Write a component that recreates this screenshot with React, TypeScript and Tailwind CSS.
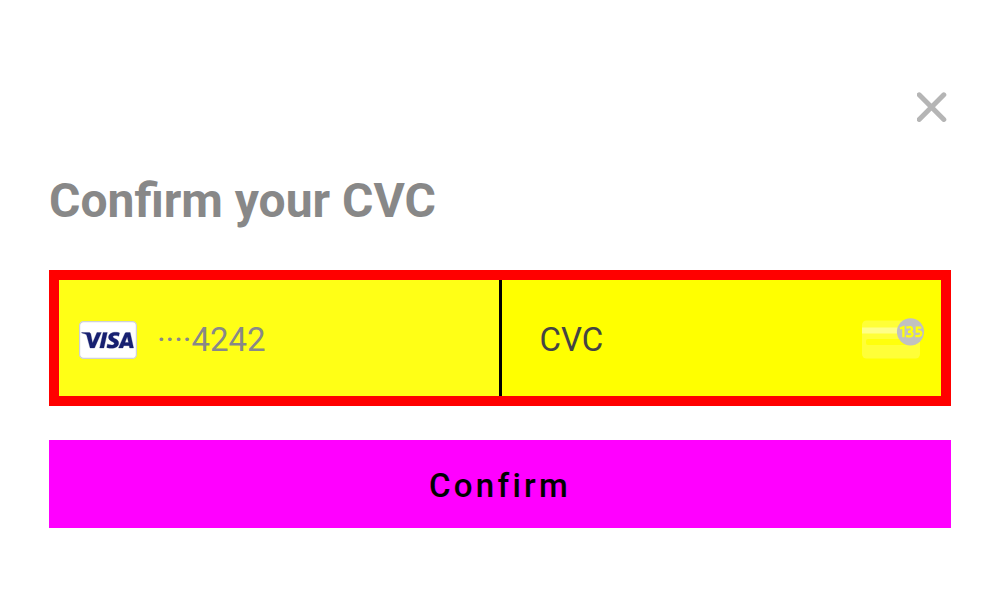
function CloseIcon() {
  return (
    <svg viewBox="0 0 30 30" className="size-[30px]" fill="none" stroke="#b5b5b5" strokeWidth="5" strokeLinecap="round" aria-hidden="true">
      <path d="M2.2 2.8 L26.8 27.4 M26.8 2.8 L2.2 27.4" />
    </svg>
  );
}

function VisaLogo() {
  return (
    <svg viewBox="0 0 58 38" className="h-[38px] w-[58px] shrink-0" role="img" aria-label="Visa">
      <rect x="0.6" y="0.6" width="56.8" height="36.8" rx="4" fill="#fff" stroke="#ced0d8" strokeWidth="1.2" />
      <g transform="translate(2.6 11.2) scale(0.052 0.0495)" fill="#172070" stroke="#172070" strokeWidth="6">
        <path d="M651.19.5c-70.93,0-134.32,36.77-134.32,104.69,0,77.9,112.42,83.28,112.42,122.42,0,16.48-18.88,31.23-51.14,31.23-45.77,0-79.98-20.61-79.98-20.61l-14.64,68.55s39.41,17.41,91.73,17.41c77.55,0,138.58-38.57,138.58-107.66,0-82.32-112.89-87.54-112.89-123.86,0-12.91,15.5-27.05,47.66-27.05,36.29,0,65.89,14.99,65.89,14.99l14.33-66.2S696.61.5,651.18.5ZM2.22,5.5L.5,15.49s29.84,5.46,56.72,16.36c34.61,12.49,37.07,19.77,42.9,42.35l63.51,244.83h85.14L379.93,5.5h-84.94l-84.28,213.17-34.39-180.7C173.17,17.29,157.21,5.5,137.67,5.5H2.23ZM414.05,5.5l-66.63,313.53h81L494.85,5.5h-80.8ZM865.82,5.5c-19.53,0-29.88,10.46-37.47,28.73l-118.67,284.8h84.94l16.43-47.47h103.48l9.99,47.47h74.95L934.08,5.5h-68.27ZM876.87,90.21l25.18,117.65h-67.45l42.28-117.65Z" />
      </g>
    </svg>
  );
}

function SecurityCodeIcon() {
  return (
    <svg viewBox="0 0 64 44" className="h-11 w-16 shrink-0" aria-hidden="true">
      <rect x="1" y="2.5" width="58" height="38" rx="4.5" fill="#ffff38" />
      <rect x="1" y="9.5" width="58" height="6" fill="#ffff88" />
      <rect x="5" y="21" width="50" height="6" rx="2" fill="#ffff0c" />
      <circle cx="49.5" cy="13.8" r="13.6" fill="#c1c1c1" />
      <g fill="none" stroke="#ffff0c" strokeWidth="2.3" transform="translate(0 -1.7)">
        <path d="M39 12.2 L42.4 10.9 V21" />
        <path d="M45.3 11.4 Q51 9.6 51 12.9 Q51 15.3 47 15.5 Q51.6 15.6 51.6 18 Q51.4 21.2 45.1 19.6" />
        <path d="M60.3 11.4 H55.8 V15.2 Q60.5 14.4 60.3 17.3 Q60 20.8 54.3 19.6" />
      </g>
    </svg>
  );
}

export default function App() {
  return (
    <main className="min-h-screen bg-white px-[49px] pt-[92px] font-['Roboto',sans-serif]">
      <div className="flex justify-end pr-1">
        <button type="button" aria-label="Close">
          <CloseIcon />
        </button>
      </div>
      <form onSubmit={(event) => event.preventDefault()}>
        <h1 className="mt-[49px] text-[48px] leading-[60px] font-bold text-[#888888]">Confirm your CVC</h1>
        <div className="mt-[39px] grid h-[136px] grid-cols-[1fr_3px_1fr] border-10 border-[#ff0000] bg-[#ffff00]">
          <div className="flex min-w-0 items-center gap-5 bg-[#ffff16] pt-1 pl-5 text-[33px] text-[#888888]">
            <VisaLogo />
            <span>····4242</span>
          </div>
          <div className="bg-black" />
          <div className="flex min-w-0 items-center pt-1 pr-4 pl-[38px]">
            <input
              type="text"
              inputMode="numeric"
              aria-label="CVC"
              placeholder="CVC"
              className="min-w-0 flex-1 bg-transparent text-[33px] text-[#444444] outline-none placeholder:text-[#444444]"
            />
            <SecurityCodeIcon />
          </div>
        </div>
        <button type="submit" className="mt-[34px] h-22 w-full bg-[#ff00ff] pt-1 text-[33px] font-medium tracking-widest text-black">
          Confirm
        </button>
      </form>
    </main>
  );
}
